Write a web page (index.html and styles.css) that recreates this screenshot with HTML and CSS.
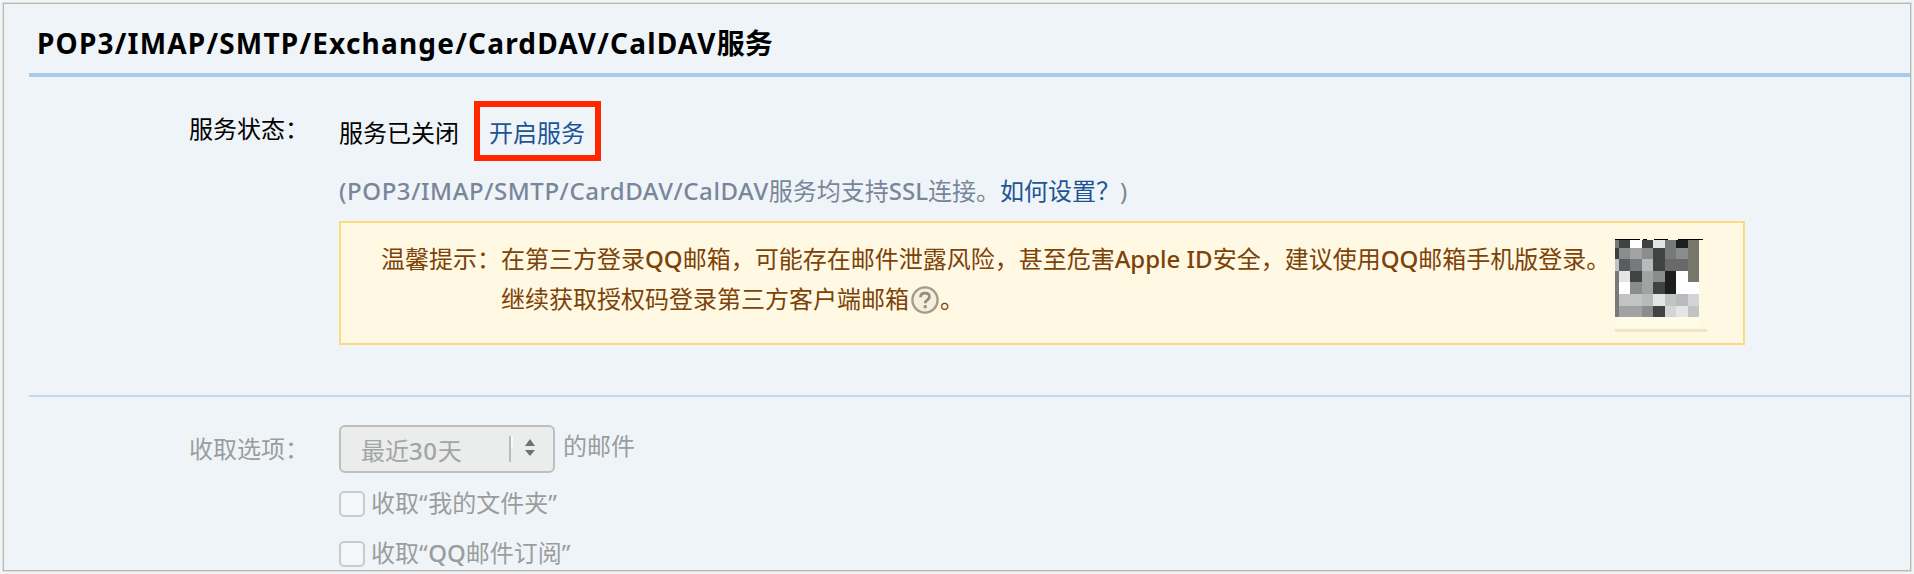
FILE: index.html
```html
<!DOCTYPE html>
<html lang="zh-CN">
<head>
<meta charset="utf-8">
<title>POP3/IMAP/SMTP服务</title>
<link rel="stylesheet" href="styles.css">
</head>
<body>
<main class="panel">
  <h1 class="title"><span class="title-latin">POP3/IMAP/SMTP/Exchange/CardDAV/CalDAV</span>服务</h1>

  <section class="row status-row">
    <div class="label">服务状态：</div>
    <div class="content">
      <div class="status"><span class="status-text">服务已关闭</span><a class="open-link">开启服务</a></div>
      <p class="hint"><span class="hint-latin">(POP3/IMAP/SMTP/CardDAV/CalDAV</span>服务均支持<span class="ssl">SSL</span>连接。<a class="help-link">如何设置？</a>)</p>
      <div class="notice">
        <div class="notice-label">温馨提示：</div>
        <div class="notice-text">
          <div>在第三方登录<span class="qq">QQ</span>邮箱，可能存在邮件泄露风险，甚至危害<span class="apple">Apple ID</span>安全，建议使用<span class="qq">QQ</span>邮箱手机版登录。</div>
          <div class="notice-line">继续获取授权码登录第三方客户端邮箱<svg class="help" viewBox="0 0 28 28"><circle cx="14" cy="14" r="12.6" fill="#f6efdc" stroke="#a39c8c" stroke-width="2.4"/><path d="M9.6 11.2C9.6 8.6 11.400 7.200 14 7.200S18.400 8.700 18.400 11C18.400 14 14.200 14 14.200 17.200" fill="none" stroke="#968d7c" stroke-width="2.800"/><rect x="12.700" y="19.200" width="3" height="3" fill="#968d7c"/></svg>。</div>
        </div>
        <svg class="code" viewBox="0 0 276 282" shape-rendering="crispEdges">
          <path fill="#000" d="M0 0h75v3H0zM84 0h12v3H84zM117 0h42v3h-42zM189 0h75v3h-75z"/>
          <path fill="#77797a" d="M0 3h12v24H0zM0 96h12v138H0z"/><path fill="#3c3e3f" d="M0 27h12v34H0z"/><path fill="#bfc1c2" d="M0 61h12v35H0z"/>
          <path fill="#414343" d="M12 3h34v24H12zM81 3h34v24H81zM115 27h35v69h-35zM46 96h35v34H46zM115 130h35v35h-35zM115 200h35v33h-35z"/>
          <path fill="#fff" d="M46 3h35v24H46zM12 130h34v35H12zM184 96h34v69h-34zM218 130h35v35h-35z"/>
          <path fill="#e4e5e5" d="M115 3h35v24h-35zM12 96h34v34H12zM115 165h35v35h-35zM184 200h34v33h-34z"/>
          <path fill="#77797a" d="M150 3h34v58h-34zM46 61h35v35H46z"/>
          <path fill="#1d1f1f" d="M184 3h34v24h-34zM150 96h34v69h-34z"/>
          <path fill="#77766a" d="M218 3h35v127h-35z"/>
          <path fill="#8b8d8d" d="M12 27h34v34H12zM81 27h34v34H81zM184 27h34v34h-34zM115 96h35v34h-35zM46 130h35v35H46zM81 200h34v33H81z"/>
          <path fill="#a1a2a3" d="M46 27h35v34H46zM81 96h34v69H81zM12 200h69v33H12z"/>
          <path fill="#5a5c5d" d="M12 61h34v35H12z"/>
          <path fill="#b8babd" d="M81 61h34v35H81zM81 165h34v35H81zM184 165h34v35h-34z"/>
          <path fill="#69696b" d="M150 61h68v35h-68z"/>
          <path fill="#c2c4c4" d="M12 165h69v35H12zM150 165h34v35h-34zM218 200h35v33h-35z"/>
          <path fill="#d3d4d5" d="M150 200h34v33h-34zM218 165h35v35h-35z"/>
          <path fill="#fffbe9" d="M0 233h253v30H0z"/>
          <path fill="#f3e3c4" d="M0 269h276v9H0z"/>
        </svg>
      </div>
    </div>
  </section>

  <section class="row options-row">
    <div class="label">收取选项：</div>
    <div class="content">
      <div class="range">
        <div class="select"><span>最近<span class="num">30</span>天</span><svg class="arrows" viewBox="0 0 30 28"><path d="M1 1v26" stroke="#b9bbbb" stroke-width="2"/><path d="M3 1v12" stroke="#fafafa" stroke-width="2"/><path d="M16 11l5-7 5 7zM16 15h10l-5 6z" fill="#6f7170"/></svg></div>
        <span>的邮件</span>
      </div>
      <div class="check"><span class="box"></span><span>收取<span class="quote">“</span>我的文件夹<span class="quote">”</span></span></div>
      <div class="check"><span class="box"></span><span>收取<span class="quote">“</span><span class="qq">QQ</span>邮件订阅<span class="quote">”</span></span></div>
    </div>
  </section>
</main>
</body>
</html>
```
FILE: styles.css
```css
* { box-sizing: border-box; }
body {
  margin: 0;
  padding: 4px;
  height: 574px;
  overflow: hidden;
  background: #f4f4f4;
  font: 24px/36px "Noto Sans", "Noto Sans CJK SC", sans-serif;
  color: #000;
}
.panel {
  height: 566px;
  overflow: hidden;
  background: #eff4f9;
  padding-left: 25px;
  box-shadow: 0 0 0 1px #b7b9b9, 0 0 0 2px #dcdddd;
}
.title {
  margin: 0;
  padding: 21px 0 12px 8px;
  height: 73px;
  border-bottom: 4px solid #a9c8ea;
  font-size: 28px;
  line-height: 36px;
  font-weight: 700;
  white-space: nowrap;
}
.title-latin { letter-spacing: 1.2px; }
.hint-latin { letter-spacing: 0.57px; }
.hint-latin, .ssl, .apple, .qq, .num { font-weight: 500; }
.quote, .num { letter-spacing: 0.6px; }
.row { display: grid; grid-template-columns: 150px 1fr; padding-left: 160px; }
.label { white-space: nowrap; }
.status-row { height: 320px; padding-top: 24px; border-bottom: 2px solid #c5d8ea; }
.status-row .label { padding-top: 10px; }
.status { display: flex; height: 60px; }
.status-text { width: 135px; padding-top: 14px; }
.open-link {
  width: 127px;
  border: 6px solid #ff2600;
  padding: 8px 0 0 9px;
  color: #1e5494;
  white-space: nowrap;
}
.hint { margin: 12px 0; color: #798699; white-space: nowrap; }
.help-link { color: #1e5494; }
.notice {
  display: flex;
  width: 1406px;
  height: 124px;
  border: 2px solid #fcdb80;
  background: #fff8e2;
  padding: 16px 0 0 40px;
  color: #7c4208;
  line-height: 40px;
  white-space: nowrap;
}
.notice-label { width: 120px; }
.notice-text { width: 1114px; }
.notice-line { display: flex; align-items: center; }
.help { width: 28px; height: 28px; margin: 2px 1px 0 2px; }
.code { width: 92px; height: 94px; }
.options-row { padding-top: 28px; color: #9b9d9d; }
.options-row .label { padding-top: 6px; }
.range { display: flex; gap: 8px; height: 48px; line-height: 42px; }
.select {
  display: flex;
  justify-content: space-between;
  width: 216px;
  border: 2px solid #bec0c0;
  border-radius: 6px;
  background: #ebecec;
  padding: 5px 14px 0 20px;
  line-height: 38px;
  color: #a3a5a5;
}
.arrows { width: 30px; height: 28px; margin-top: 3px; }
.check { display: flex; gap: 6px; height: 26px; margin-top: 18px; line-height: 24px; }
.check + .check { margin-top: 24px; }
.box { width: 26px; height: 26px; border: 2px solid #c7cbcd; border-radius: 5px; background: #f4f7f8; }
```
